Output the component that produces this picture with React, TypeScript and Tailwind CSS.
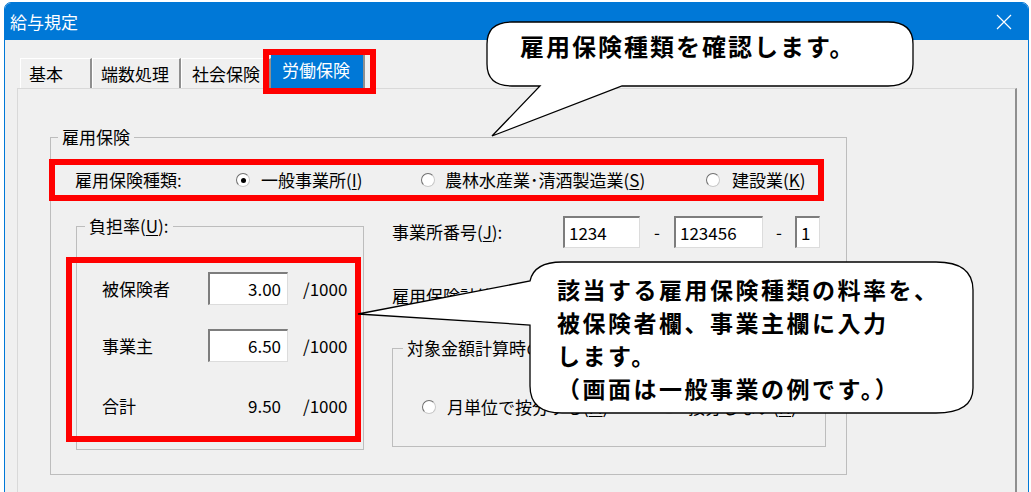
import React from "react";

function Radio({ checked }: { checked?: boolean }) {
  return (
    <span className="relative flex h-[14px] w-[14px] shrink-0 items-center justify-center rounded-full border border-[#6f6f6f] border-b-[#c8c8c8] border-r-[#c8c8c8] bg-white">
      {checked && <span className="h-[5px] w-[5px] rounded-full bg-black" />}
    </span>
  );
}

function Key({ k }: { k: string }) {
  return (
    <>
      (<span className="underline underline-offset-2">{k}</span>)
    </>
  );
}

function Tab({
  label,
  className,
}: {
  label: string;
  className: string;
}) {
  return (
    <div
      className={`flex h-[30px] items-center border-l border-t border-white border-r-2 border-r-[#8f8f8f] ${className}`}
    >
      {label}
    </div>
  );
}

export default function App() {
  return (
    <div className="relative h-[492px] w-[1031px] overflow-hidden bg-white font-['Noto_Sans_CJK_JP','Noto_Sans',sans-serif] text-[17px] leading-[20px] text-black">
      {/* window */}
      <div className="ml-[4px] mt-[2px] h-[500px] w-[1025px] overflow-hidden rounded-t-[7px] border border-[#0078d7] bg-[#f0f0f0]">
        <div className="flex h-[37px] items-center justify-between bg-[#0078d7] pl-[5px] pr-[16px] text-white">
          <span>給与規定</span>
          <svg width="16" height="16" viewBox="0 0 16 16">
            <path d="M1 1L15 15M15 1L1 15" stroke="white" strokeWidth="1.2" />
          </svg>
        </div>

        <div className="pl-[12px] pr-[11px] pt-[15px]">
          {/* tabs */}
          <div className="ml-[3px] flex h-[33px] items-end">
            <Tab label="基本" className="w-[72px] pl-[8px]" />
            <Tab label="端数処理" className="w-[89px] pl-[8px]" />
            <Tab label="社会保険" className="w-[90px] pl-[10px]" />
            <div className="flex h-[33px] w-[94px] items-center border-r-2 border-[#8f8f8f] bg-[#0078d7] pb-[3px] pl-[11px] text-white">
              労働保険
            </div>
          </div>

          {/* panel */}
          <div className="h-[420px] w-[1000px] border-l border-t border-[#d9d9d9] border-r-2 border-r-[#8f8f8f] pl-[32px] pt-[38px]">
            <fieldset className="w-[797px] border border-[#bdbdbd] pb-[24px]">
              <legend className="ml-[7px] px-[4px] leading-[20px]">雇用保険</legend>

              <div className="-ml-[2px] mt-[12px] flex h-[42px] w-[775px] items-center border-[6px] border-[#ff0000] pl-[20px]">
                <span className="w-[161px]">雇用保険種類:</span>
                <div className="flex w-[185px] items-center">
                  <Radio checked />
                  <span className="ml-[11px]">
                    一般事業所<Key k="I" />
                  </span>
                </div>
                <div className="flex w-[285px] items-center">
                  <Radio />
                  <span className="ml-[10px]">
                    農林水産業･清酒製造業<Key k="S" />
                  </span>
                </div>
                <div className="flex items-center">
                  <Radio />
                  <span className="ml-[12px]">
                    建設業<Key k="K" />
                  </span>
                </div>
              </div>

              <div className="mt-[15px] flex items-start">
                {/* burden rate */}
                <fieldset className="ml-[25px] w-[288px] border border-[#bdbdbd] pb-[27px] pl-[25px] pt-[36px]">
                  <legend className="ml-[-17px] px-[4px] leading-[20px]">
                    負担率<Key k="U" />:
                  </legend>
                  <div className="flex h-[33px] items-center">
                    <span className="w-[106px]">被保険者</span>
                    <div className="flex h-[33px] w-[80px] items-center justify-end border-l-2 border-t-2 border-[#7d7d7d] border-b border-r border-b-[#dcdcdc] border-r-[#dcdcdc] bg-white pr-[6px]">
                      3.00
                    </div>
                    <span className="ml-[15px]">/1000</span>
                  </div>
                  <div className="mt-[24px] flex h-[33px] items-center">
                    <span className="w-[106px]">事業主</span>
                    <div className="flex h-[33px] w-[80px] items-center justify-end border-l-2 border-t-2 border-[#7d7d7d] border-b border-r border-b-[#dcdcdc] border-r-[#dcdcdc] bg-white pr-[6px]">
                      6.50
                    </div>
                    <span className="ml-[15px]">/1000</span>
                  </div>
                  <div className="mt-[27px] flex h-[33px] items-center">
                    <span className="w-[106px]">合計</span>
                    <div className="flex h-[33px] w-[80px] items-center justify-end pr-[7px]">9.50</div>
                    <span className="ml-[15px]">/1000</span>
                  </div>
                </fieldset>

                {/* right column */}
                <div className="ml-[28px] w-[434px]">
                  <div className="flex h-[32px] items-center">
                    <span className="w-[171px]">
                      事業所番号<Key k="J" />:
                    </span>
                    <div className="flex h-[32px] w-[77px] items-center border-l-2 border-t-2 border-[#7d7d7d] border-b border-r border-b-[#dcdcdc] border-r-[#dcdcdc] bg-white pl-[4px]">
                      1234
                    </div>
                    <span className="w-[34px] text-center">-</span>
                    <div className="flex h-[32px] w-[89px] items-center border-l-2 border-t-2 border-[#7d7d7d] border-b border-r border-b-[#dcdcdc] border-r-[#dcdcdc] bg-white pl-[4px]">
                      123456
                    </div>
                    <span className="w-[32px] text-center">-</span>
                    <div className="flex h-[32px] w-[25px] items-center border-l-2 border-t-2 border-[#7d7d7d] border-b border-r border-b-[#dcdcdc] border-r-[#dcdcdc] bg-white pl-[4px]">
                      1
                    </div>
                  </div>

                  <div className="mt-[38px]">雇用保険計算方法:</div>

                  <fieldset className="mt-[32px] w-[434px] border border-[#bdbdbd] pb-[29px]">
                    <legend className="ml-[10px] px-[4px] leading-[20px]">対象金額計算時の按分方法</legend>
                    <div className="mt-[39px] flex h-[20px] items-center pl-[29px]">
                      <div className="flex w-[240px] items-center">
                        <Radio />
                        <span className="ml-[11px]">
                          月単位で按分する<Key k="M" />
                        </span>
                      </div>
                      <div className="flex items-center">
                        <Radio />
                        <span className="ml-[12px]">
                          按分しない<Key k="N" />
                        </span>
                      </div>
                    </div>
                  </fieldset>
                </div>
              </div>
            </fieldset>
          </div>
        </div>
      </div>

      {/* annotation highlights */}
      <div className="absolute left-[263px] top-[49px] h-[45px] w-[113px] border-[6px] border-[#ff0000]" />
      <div className="absolute left-[66px] top-[257px] h-[185px] w-[295px] border-[6px] border-[#ff0000]" />

      {/* callouts */}
      <svg className="pointer-events-none absolute left-0 top-0" width="1031" height="492">
        <path
          d="M512 22 L888 22 Q913 22 913 44 L913 64 Q913 86 888 86 L622 86 L492 136 L540 86 L512 86 Q487 86 487 64 L487 44 Q487 22 512 22 Z"
          fill="white"
          stroke="black"
          strokeWidth="1.3"
        />
        <path
          d="M562 262 L936 262 Q973 262 973 290 L973 388 Q973 413 936 413 L562 413 Q530 413 530 386 L530 325 L358 314 L530 281 Q534 262 562 262 Z"
          fill="white"
          stroke="black"
          strokeWidth="1.3"
        />
      </svg>
      <div className="absolute left-[520px] top-[31px] text-[24px] font-bold leading-[30px] tracking-[2px]">
        雇用保険種類を確認します。
      </div>
      <div className="absolute left-[557px] top-[273px] text-[23px] font-bold leading-[33px] tracking-[2.5px]">
        <div>該当する雇用保険種類の料率を、</div>
        <div>被保険者欄、事業主欄に入力</div>
        <div>します。</div>
        <div>（画面は一般事業の例です。）</div>
      </div>
    </div>
  );
}
